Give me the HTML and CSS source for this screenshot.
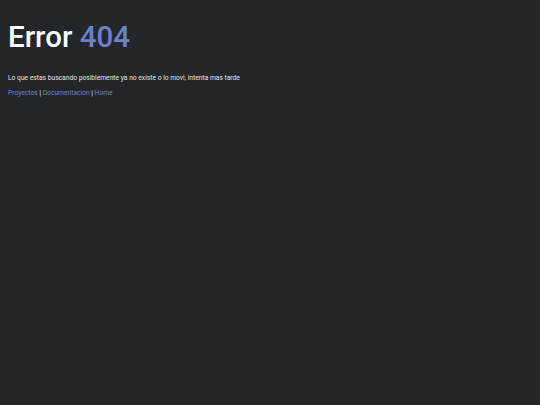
FILE: index.html
```html
<!DOCTYPE html>
<html lang="es">
<head>
<meta charset="utf-8">
<title>Error 404</title>
<link rel="stylesheet" href="styles.css">
</head>
<body>
<main class="page">
  <h1 class="title">Error <span class="code">404</span></h1>
  <p class="message">Lo que estas buscando posiblemente ya no existe o lo movi, intenta mas tarde</p>
  <nav class="links">
    <a href="#">Proyectos</a> | <a href="#">Documentacion</a> | <a href="#">Home</a>
  </nav>
</main>
</body>
</html>
```

FILE: styles.css
```css
html, body {
  margin: 0;
  padding: 0;
  background: #24272a;
  height: 100%;
}
body {
  font-family: Roboto, "Liberation Sans", Arial, sans-serif;
  color: #e2e2e2;
}
.page {
  padding: 14px 8px;
}
.title {
  margin: 0;
  font-size: 29.5px;
  font-weight: 500;
  line-height: 46px;
  color: #ffffff;
}
.code {
  color: #6b82c8;
}
.message {
  margin: 13px 0 0;
  font-size: 6.7px;
  font-weight: 400;
  line-height: 10px;
}
.links {
  margin-top: 5px;
  font-size: 6.7px;
  line-height: 10px;
  color: #e2e2e2;
}
.links a {
  color: #6b82c8;
  text-decoration: none;
}
```
